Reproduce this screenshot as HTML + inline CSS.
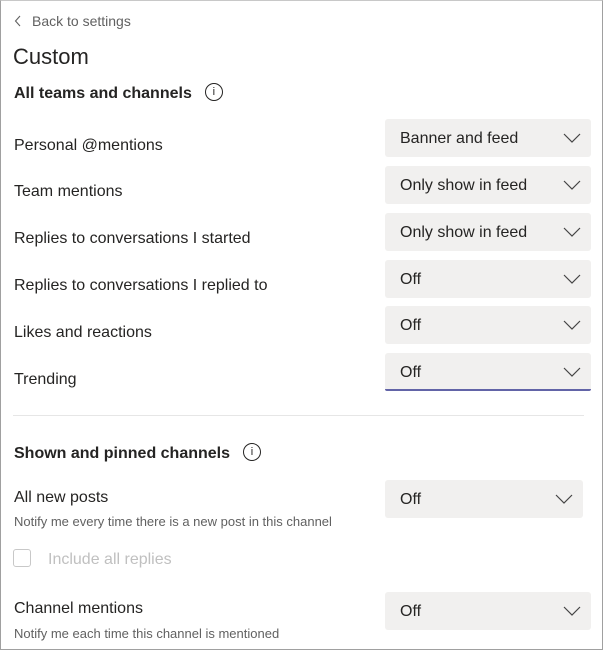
<!DOCTYPE html>
<html><head><style>
*{margin:0;padding:0;box-sizing:border-box}
body{width:604px;height:650px;background:#fff;font-family:"Liberation Sans",sans-serif;color:#252423;position:relative;overflow:hidden}
.frame{position:absolute;left:0;top:0;width:603px;height:650px;border:1px solid #a0a0a0;border-top-color:#c8c8c8}
.a{position:absolute;white-space:nowrap}
.lbl{font-size:16px;left:14px}
.dd{position:absolute;left:385px;width:206px;height:38px;background:#f1f0ef;border-radius:3px;font-size:16px;padding-left:15px;line-height:40px;color:#252423}
.dd svg{position:absolute;right:10px;top:14px}
.sub{font-size:13px;left:14px;color:#616161}
.h{font-weight:bold;font-size:16px;left:14px}
.info{display:inline-block;width:18px;height:18px;border:1.3px solid #252423;border-radius:50%;font-size:11px;text-align:center;line-height:16px;font-weight:normal;vertical-align:middle;margin-left:13px;position:relative;top:-2px}
</style></head><body>
<div class="frame"></div>
<div class="a" style="left:14px;top:13px;font-size:14px;color:#616161"><svg width="8" height="12" style="vertical-align:-1px;margin-right:10px"><path d="M6 1L1.5 6L6 11" fill="none" stroke="#616161" stroke-width="1.1"/></svg>Back to settings</div>
<div class="a" style="left:13px;top:44px;font-size:22px">Custom</div>
<div class="a h" style="top:85px">All teams and channels<span class="info">i</span></div>

<div class="a lbl" style="top:137px">Personal @mentions</div>
<div class="a lbl" style="top:183px">Team mentions</div>
<div class="a lbl" style="top:230px">Replies to conversations I started</div>
<div class="a lbl" style="top:277px">Replies to conversations I replied to</div>
<div class="a lbl" style="top:324px">Likes and reactions</div>
<div class="a lbl" style="top:371px">Trending</div>

<div class="dd" style="top:119px">Banner and feed<svg width="18" height="10"><path d="M1 1L9 9L17 1" fill="none" stroke="#444" stroke-width="1.2"/></svg></div>
<div class="dd" style="top:166px">Only show in feed<svg width="18" height="10"><path d="M1 1L9 9L17 1" fill="none" stroke="#444" stroke-width="1.2"/></svg></div>
<div class="dd" style="top:213px">Only show in feed<svg width="18" height="10"><path d="M1 1L9 9L17 1" fill="none" stroke="#444" stroke-width="1.2"/></svg></div>
<div class="dd" style="top:260px">Off<svg width="18" height="10"><path d="M1 1L9 9L17 1" fill="none" stroke="#444" stroke-width="1.2"/></svg></div>
<div class="dd" style="top:306px">Off<svg width="18" height="10"><path d="M1 1L9 9L17 1" fill="none" stroke="#444" stroke-width="1.2"/></svg></div>
<div class="dd" style="top:353px;border-bottom:2px solid #6264a7;border-radius:3px 3px 2px 2px">Off<svg width="18" height="10"><path d="M1 1L9 9L17 1" fill="none" stroke="#444" stroke-width="1.2"/></svg></div>

<div class="a" style="left:13px;top:415px;width:571px;height:1px;background:#e6e6e6"></div>

<div class="a h" style="top:445px">Shown and pinned channels<span class="info">i</span></div>
<div class="a lbl" style="top:489px">All new posts</div>
<div class="a sub" style="top:514px">Notify me every time there is a new post in this channel</div>
<div class="dd" style="top:480px;width:198px">Off<svg width="18" height="10"><path d="M1 1L9 9L17 1" fill="none" stroke="#444" stroke-width="1.2"/></svg></div>
<div class="a" style="left:13px;top:549px;width:18px;height:18px;border:1px solid #c8c8c8;border-radius:3px"></div>
<div class="a" style="left:48px;top:551px;font-size:16px;color:#c0c0c0">Include all replies</div>
<div class="a lbl" style="top:600px">Channel mentions</div>
<div class="a sub" style="top:626px">Notify me each time this channel is mentioned</div>
<div class="dd" style="top:592px">Off<svg width="18" height="10"><path d="M1 1L9 9L17 1" fill="none" stroke="#444" stroke-width="1.2"/></svg></div>
</body></html>
